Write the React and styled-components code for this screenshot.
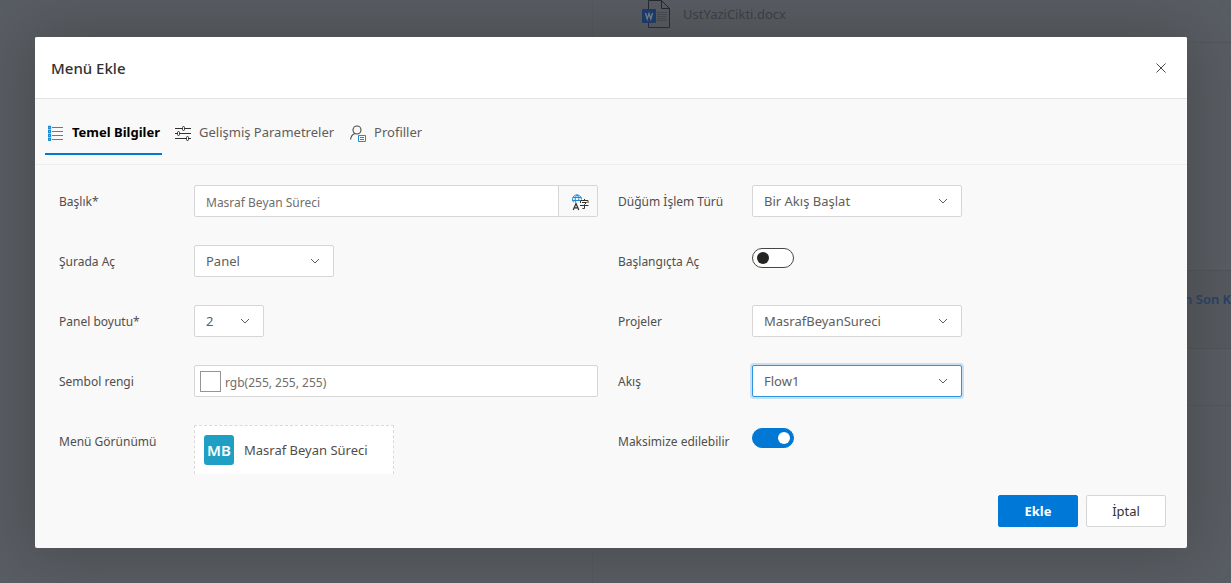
import React from "react";
import styled, { createGlobalStyle } from "styled-components";

const GlobalStyle = createGlobalStyle`
  * { box-sizing: border-box; }
  body { margin: 0; background: #595d64; color: #504e4c; }
  body, button, input, select {
    font-family: "Noto Sans", "Segoe UI", sans-serif;
    font-size: 13px;
    line-height: 20px;
  }
`;

const Screen = styled.div`
  display: grid;
  min-height: 100vh;
  overflow: hidden;
`;

const Backdrop = styled.div`
  grid-area: 1 / 1;
  display: grid;
  grid-template-columns: 592fr 639fr;
`;

const BackdropPane = styled.div`
  display: flex;
  flex-direction: column;
  min-width: 0;
  border-left: ${(p) => (p.$divided ? "1px solid #555960" : "0")};
`;

const FileRow = styled.div`
  display: flex;
  align-items: flex-start;
  gap: 12px;
  height: 43px;
  padding-left: 48px;
  border-bottom: 1px solid #53575c;
  color: #3a3e45;
`;

const FileName = styled.span`
  padding-top: 4px;
`;

const GridHeader = styled.div`
  display: flex;
  justify-content: flex-end;
  align-items: flex-start;
  height: 79px;
  margin-top: 227px;
  padding-top: 18px;
  border: solid #505459;
  border-width: 1px 0;
  background: #565a60;
  color: #243f68;
  font-weight: 600;
  white-space: nowrap;
`;

const GridRow = styled.div`
  height: 57px;
  border-bottom: 1px solid #53575c;
`;

const Overlay = styled.div`
  grid-area: 1 / 1;
  z-index: 1;
  padding: 37px 44px 35px 35px;
`;

const Dialog = styled.section`
  border-radius: 2px;
  background: #f9f9f9;
  box-shadow: 0 0 60px 4px rgba(60, 64, 60, 0.6);
`;

const DialogHeader = styled.header`
  display: flex;
  align-items: center;
  justify-content: space-between;
  height: 62px;
  padding: 0 16px;
  border-bottom: 1px solid #e3e3e3;
  border-radius: 2px 2px 0 0;
  background: #fff;
`;

const Title = styled.h1`
  margin: 0;
  color: #323130;
  font-size: 15px;
  font-weight: 500;
`;

const CloseButton = styled.button`
  display: flex;
  padding: 5px;
  border: 0;
  background: none;
  color: #484644;
`;

const Tabs = styled.nav`
  display: flex;
  gap: 10px;
  height: 66px;
  padding: 12px 10px 0;
  border-bottom: 1px solid #eee;
`;

const Tab = styled.button`
  display: flex;
  align-items: center;
  gap: 8px;
  height: 44px;
  padding: 0 2px 0 3px;
  border: 0;
  border-bottom: 2px solid ${(p) => (p.$active ? "#0078d4" : "transparent")};
  background: none;
  color: ${(p) => (p.$active ? "#000" : "#605e5c")};
  font-weight: ${(p) => (p.$active ? 700 : 400)};
  white-space: nowrap;

  & > svg { margin-top: 2px; }
`;

const Form = styled.form`
  margin: 0;
`;

const Columns = styled.div`
  display: grid;
  grid-template-columns: 539fr 549fr;
  gap: 20px;
  padding: 20px 20px 0 24px;
`;

const Column = styled.div`
  display: flex;
  flex-direction: column;
  gap: 28px;
  min-width: 0;
`;

const Field = styled.div`
  display: flex;
  align-items: flex-start;
  min-height: 32px;
`;

const Label = styled.label`
  flex: none;
  width: ${(p) => p.$width || 135}px;
  padding-top: 7px;
  font-size: 12px;
`;

const InputGroup = styled.div`
  display: flex;
  flex: 1;
  align-items: center;
  min-width: 0;
  height: 32px;
  border: 1px solid #d6d6d6;
  border-radius: 2px;
  background: #fff;
`;

const TextInput = styled.input`
  flex: 1;
  min-width: 0;
  height: 30px;
  padding: 2px ${(p) => p.$inset}px 0;
  border: 0;
  outline: 0;
  background: none;
  color: #706e6c;
  font-size: 12px;
`;

const TranslateButton = styled.button`
  display: flex;
  align-items: center;
  justify-content: center;
  width: 39px;
  height: 30px;
  padding: 2px 0 0 4px;
  border: 0;
  border-left: 1px solid #d6d6d6;
  background: #f9f9f9;
`;

const Swatch = styled.button`
  width: 21px;
  height: 21px;
  margin-left: 5px;
  padding: 0;
  border: 1px solid #979593;
  background: #fff;
`;

const SelectFrame = styled.div`
  display: grid;
  align-items: center;
  width: ${(p) => p.$width}px;
  height: 32px;
  border: 1px solid ${(p) => (p.$focused ? "#2b95e0" : "#d6d6d6")};
  border-radius: 2px;
  background: #fff;
  box-shadow: ${(p) => (p.$focused ? "0 0 0 2px #c7e0f4" : "none")};

  & > * { grid-area: 1 / 1; }
  & > svg { justify-self: end; margin-right: 13px; pointer-events: none; }
`;

const NativeSelect = styled.select`
  appearance: none;
  width: 100%;
  height: 30px;
  padding: 0 28px 0 11px;
  border: 0;
  outline: 0;
  background: none;
  color: #605e5c;
`;

const Toggle = styled.input`
  appearance: none;
  display: flex;
  align-items: center;
  width: 42px;
  height: 20px;
  margin: 3px 0 0;
  padding: 0 4px;
  border: 1px solid #484644;
  border-radius: 10px;
  background: #fff;

  &::before {
    content: "";
    width: 12px;
    height: 12px;
    border-radius: 50%;
    background: #252423;
  }

  &:checked {
    justify-content: flex-end;
    padding: 0 3px;
    border-color: #0078d4;
    background: #0078d4;
  }

  &:checked::before { background: #fff; }
`;

const MenuPreview = styled.div`
  display: flex;
  align-items: center;
  gap: 10px;
  width: 200px;
  height: 49px;
  padding: 0 9px;
  border: 1px dashed #dadada;
  border-bottom: 0;
  background: #fff;
`;

const Monogram = styled.span`
  width: 30px;
  border-radius: 3px;
  background: #1f9fc4;
  color: #fff;
  font-size: 15px;
  font-weight: 600;
  line-height: 30px;
  text-align: center;
`;

const Actions = styled.footer`
  display: flex;
  justify-content: flex-end;
  gap: 8px;
  padding: 21px 21px;
`;

const ActionButton = styled.button`
  width: 80px;
  height: 32px;
  padding: 0;
  border: 1px solid ${(p) => (p.$primary ? "#0078d7" : "#d6d6d6")};
  border-radius: 2px;
  background: ${(p) => (p.$primary ? "#0078d7" : "#fff")};
  color: ${(p) => (p.$primary ? "#fff" : "#323130")};
  font-weight: ${(p) => (p.$primary ? 700 : 400)};
`;

const Chevron = () => (
  <svg width="10" height="6" viewBox="0 0 10 6" fill="none" stroke="#605e5c" aria-hidden="true">
    <path d="M1 1l4 4 4-4" />
  </svg>
);

const WordIcon = () => (
  <svg width="30" height="29" viewBox="0 0 30 29" fill="none" aria-hidden="true">
    <path d="M7.500 .5H20.500L28.500 8.500V27.500H7.500Z" stroke="#23272d" />
    <path d="M20.500 .5V8.500H28.500" stroke="#23272d" />
    <path d="M16 12.500H26M16 14.500H26M16 16.500H26M16 18.500H26M16 20.500H26" stroke="#484d53" />
    <rect x="1" y="9" width="14" height="14" rx="1" fill="#163a70" />
    <path d="M4.500 13l1.700 6 1.800-5.500 1.800 5.500 1.700-6" stroke="#7d8692" strokeWidth="1.300" />
  </svg>
);

const ListIcon = () => (
  <svg width="16" height="16" viewBox="0 0 16 16" fill="none" aria-hidden="true">
    <path d="M4 2.500H15M4 6.500H15M4 10.500H15M4 14.500H15" stroke="#797775" />
    <path
      d="M.5 1.500h2v2h-2zM.5 5.500h2v2h-2zM.5 9.500h2v2h-2zM.5 13.500h2v2h-2z"
      stroke="#1e8bd8"
      strokeWidth="1.300"
    />
  </svg>
);

const SlidersIcon = () => (
  <svg width="16" height="16" viewBox="0 0 16 16" fill="#f9f9f9" stroke="#323130" aria-hidden="true">
    <path d="M0 3.500H16M0 8.500H16M0 13.500H16" />
    <rect x="7.500" y="1.500" width="2" height="4" rx="1" />
    <rect x="2.500" y="6.500" width="2" height="4" rx="1" />
    <rect x="11.500" y="11.500" width="2" height="4" rx="1" />
  </svg>
);

const ProfileIcon = () => (
  <svg width="17" height="17" viewBox="0 0 17 17" fill="none" aria-hidden="true">
    <circle cx="8" cy="5" r="4" stroke="#484644" strokeWidth="1.100" />
    <path d="M1.600 14.500C1.900 11.300 3.400 9.300 6 8.500" stroke="#484644" strokeWidth="1.100" />
    <path d="M9.500 10.500H16.500V16.500H9.500ZM11 12.500H15M11 14.500H15" stroke="#1e8bd8" />
  </svg>
);

const TranslateIcon = () => (
  <svg width="17" height="17" viewBox="0 0 17 17" fill="none" aria-hidden="true">
    <path
      d="M1.500 8.200A4.500 4.500 0 1 1 9.500 5.500M.8 3.500H9.400M.5 6.500H8M3.500 8.500C2.800 5.500 3.200 2.500 5 .8C6.600 2.300 7 4.200 6.800 6.500"
      stroke="#1e8bd8"
    />
    <path d="M1.200 16L4 9.500L6.800 16M2.200 13.800H5.800" stroke="#323130" strokeWidth="1.200" />
    <path d="M12.500 5V7M8.500 9V6.500H16V9M10 8.500H14.500L12.500 10.500V14.500H10.500M8 11.500H16.500" stroke="#323130" />
  </svg>
);

const SelectField = ({ id, label, labelWidth, value, width, focused }) => (
  <Field>
    <Label htmlFor={id} $width={labelWidth}>{label}</Label>
    <SelectFrame $width={width} $focused={focused}>
      <NativeSelect id={id} defaultValue={value}>
        <option>{value}</option>
      </NativeSelect>
      <Chevron />
    </SelectFrame>
  </Field>
);

const ToggleField = ({ id, label, labelWidth, on }) => (
  <Field>
    <Label htmlFor={id} $width={labelWidth}>{label}</Label>
    <Toggle id={id} type="checkbox" role="switch" defaultChecked={on} />
  </Field>
);

export default function App() {
  return (
    <Screen lang="tr">
      <GlobalStyle />
      <Backdrop>
        <BackdropPane />
        <BackdropPane $divided>
          <FileRow>
            <WordIcon />
            <FileName>UstYaziCikti.docx</FileName>
          </FileRow>
          <GridHeader>n Son K</GridHeader>
          <GridRow />
        </BackdropPane>
      </Backdrop>
      <Overlay>
        <Dialog role="dialog" aria-labelledby="dialog-title">
          <DialogHeader>
            <Title id="dialog-title">Menü Ekle</Title>
            <CloseButton type="button" aria-label="Kapat">
              <svg width="10" height="10" viewBox="0 0 10 10" stroke="currentColor" aria-hidden="true">
                <path d="M.5 .5l9 9M9.500 .5l-9 9" />
              </svg>
            </CloseButton>
          </DialogHeader>
          <Tabs>
            <Tab type="button" $active><ListIcon />Temel Bilgiler</Tab>
            <Tab type="button"><SlidersIcon />Gelişmiş Parametreler</Tab>
            <Tab type="button"><ProfileIcon />Profiller</Tab>
          </Tabs>
          <Form>
            <Columns>
              <Column>
                <Field>
                  <Label htmlFor="title">Başlık*</Label>
                  <InputGroup>
                    <TextInput id="title" $inset={11} defaultValue="Masraf Beyan Süreci" />
                    <TranslateButton type="button" aria-label="Çevir"><TranslateIcon /></TranslateButton>
                  </InputGroup>
                </Field>
                <SelectField id="open-in" label="Şurada Aç" value="Panel" width={140} />
                <SelectField id="panel-size" label="Panel boyutu*" value="2" width={70} />
                <Field>
                  <Label htmlFor="color">Sembol rengi</Label>
                  <InputGroup>
                    <Swatch type="button" aria-label="Renk seç" />
                    <TextInput id="color" $inset={4} defaultValue="rgb(255, 255, 255)" />
                  </InputGroup>
                </Field>
                <Field>
                  <Label as="span">Menü Görünümü</Label>
                  <MenuPreview>
                    <Monogram>MB</Monogram>
                    <span>Masraf Beyan Süreci</span>
                  </MenuPreview>
                </Field>
              </Column>
              <Column>
                <SelectField id="node-type" label="Düğüm İşlem Türü" labelWidth={134} value="Bir Akış Başlat" width={210} />
                <ToggleField id="open-at-start" label="Başlangıçta Aç" labelWidth={134} />
                <SelectField id="projects" label="Projeler" labelWidth={134} value="MasrafBeyanSureci" width={210} />
                <SelectField id="flow" label="Akış" labelWidth={134} value="Flow1" width={210} focused />
                <ToggleField id="maximizable" label="Maksimize edilebilir" labelWidth={134} on />
              </Column>
            </Columns>
            <Actions>
              <ActionButton type="button" $primary>Ekle</ActionButton>
              <ActionButton type="button">İptal</ActionButton>
            </Actions>
          </Form>
        </Dialog>
      </Overlay>
    </Screen>
  );
}
